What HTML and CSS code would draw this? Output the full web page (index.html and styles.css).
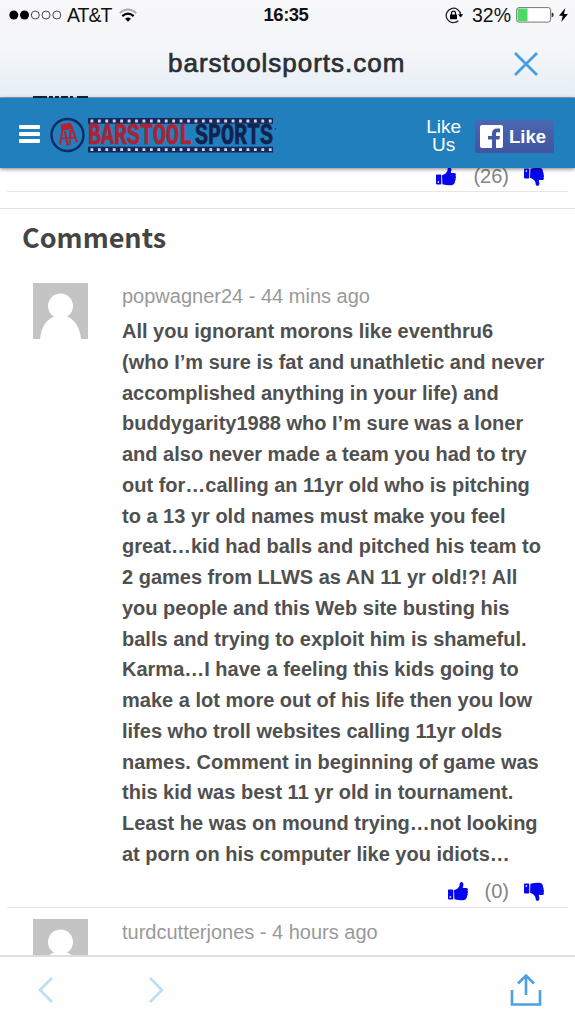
FILE: index.html
```html
<!DOCTYPE html>
<html lang="en">
<head>
    <meta charset="UTF-8">
    <meta name="viewport" content="width=device-width, initial-scale=1.0">
    <title>barstoolsports.com</title>
    <link rel="stylesheet" href="styles.css">
</head>
<body>
    <!-- shared icons -->
    <svg class="defs" width="0" height="0">
        <symbol id="thumb" viewBox="0 0 20 19">
            <path fill-rule="evenodd" d="M0.7 7.6h3.8q.8 0 .8.8v8.2q0 .8-.8.8H.8q-.8 0-.8-.8V8.400q0-.8.7-.8zM1.600 14.200v1.500h1.500v-1.500z"/>
            <path d="M6 8.300C8.500 7.600 10.400 6 11.200 4.300 11.700 3 11.500 1 12.400.4c1.300-.9 3 .2 3 2.100 0 1.500-.5 2.500-.6 3.500h3.500c1.600 0 2 1.800 1.200 2.700.7.9.6 2.100 0 2.800.4 1 .1 2-.6 2.600.2 1.500-.5 3.400-2.400 3.900-3.300.6-6.800-.1-10.100-.8z"/>
        </symbol>
        <symbol id="person" viewBox="0 0 55 56">
            <rect width="55" height="56" fill="#c4c4c4"/>
            <circle cx="27.500" cy="23" r="12.500" fill="#fff"/>
            <path d="M7 56C8 44 14 36 21 33.500h13C41 36 47 44 48 56z" fill="#fff"/>
        </symbol>
    </svg>

    <div class="browser-bar">
        <div class="status">
            <div class="carrier">
                <svg width="53" height="10" viewBox="0 0 53 10">
                    <circle cx="4.800" cy="5" r="4.500"/>
                    <circle cx="15.500" cy="5" r="4.500"/>
                    <g fill="none" stroke="#333" stroke-width="0.9">
                        <circle cx="26.300" cy="5" r="4"/>
                        <circle cx="37" cy="5" r="4"/>
                        <circle cx="47.800" cy="5" r="4"/>
                    </g>
                </svg>
                <span>AT&amp;T</span>
                <svg width="18" height="14" viewBox="0 0 18 14">
                    <path d="M6 10.800Q9 8.300 12 10.800L9 13.800z"/>
                    <path d="M3.300 8.100Q9 3.300 14.700 8.100" fill="none" stroke="#000" stroke-width="2.200"/>
                    <path d="M.7 5.100Q9-2.200 17.300 5.100" fill="none" stroke="#aaa" stroke-width="1.800"/>
                </svg>
            </div>
            <div class="clock">16:35</div>
            <div class="power">
                <svg width="19" height="17" viewBox="0 0 19 17">
                    <path d="M13.300 13.700A7.200 7.200 0 1 1 15.600 8" fill="none" stroke="#222" stroke-width="1.300"/>
                    <path d="M13 7.200h5.200l-2.600 3.400z"/>
                    <path d="M5 7.500h7v4.700H5z"/>
                    <path d="M6.500 8V6.200a2 2 0 0 1 4 0V8" fill="none" stroke="#000" stroke-width="1.200"/>
                </svg>
                <span class="percent">32%</span>
                <svg class="battery" width="38" height="16" viewBox="0 0 38 16">
                    <rect x=".6" y=".6" width="34" height="14.500" rx="2.300" fill="#fff" stroke="#777"/>
                    <path d="M2.500 1.500H11.500v12.700H2.500q-1 0-1-1V2.500q0-1 1-1z" fill="#4cd964"/>
                    <path d="M35.700 5.200q2 .5 2 2.600t-2 2.600z" fill="#333"/>
                </svg>
                <svg width="9" height="14" viewBox="0 0 9 14"><path d="M6.300 0L0 7.700h3.700L2.300 14 9 6H5z"/></svg>
            </div>
        </div>
        <div class="address">
            <span class="domain">barstoolsports.com</span>
            <svg class="close" width="26" height="26" viewBox="0 0 26 26"><path d="M2 2L24 24M24 2L2 24"/></svg>
        </div>
        <div class="cut-text"></div>
    </div>

    <div class="site-header">
        <div class="menu"><i></i><i></i><i></i></div>
        <svg class="logo" width="228" height="36" viewBox="0 0 228 36">
            <circle cx="17.500" cy="18" r="16" fill="none" stroke="#102a63" stroke-width="2.400"/>
            <g stroke="#b8202e" fill="none" stroke-width="2">
                <path d="M12.500 12L10 27.500M15 14L17.500 29M20.500 13L19.500 28M22 11L27 25.500"/>
                <path d="M11 21.500L25 20.500" stroke-width="1.300"/>
            </g>
            <path d="M10.500 7.500L20 5.800 22.500 9 23 12 11.500 13.500z" fill="#b8202e"/>
            <path class="band" d="M38 1h185v5.700H38zM38 29.700h185v5.700H38z"/>
            <path class="stars" d="M40.500 4H222M40.500 32.700H222"/>
            <text class="logo-a" x="38" y="27.300" textLength="104" lengthAdjust="spacingAndGlyphs">BARSTOOL</text>
            <text class="logo-b" x="145" y="27.300" textLength="78" lengthAdjust="spacingAndGlyphs">SPORTS</text>
            <circle cx="225.500" cy="12" r=".8" fill="#14285c"/>
        </svg>
        <div class="like-us"><div>Like</div><div>Us</div></div>
        <div class="fb-like">
            <svg width="23" height="23" viewBox="0 0 23 23">
                <rect width="23" height="23" rx="2" fill="#fff"/>
                <path d="M12 23v-8.500H8V11h4V8.500C12 5.300 14 3.500 17 3.500h3V7.200h-2.400C16.300 7.200 16 7.800 16 9v2h4l-.6 3.500H16V23z" fill="#4359a8"/>
            </svg>
            <span>Like</span>
        </div>
    </div>

    <div class="page">
        <div class="votes votes-top">
            <svg class="thumb"><use href="#thumb"/></svg>
            <span>(26)</span>
            <svg class="thumb down"><use href="#thumb"/></svg>
        </div>
        <h2>Comments</h2>
        <div class="comment">
            <svg class="avatar"><use href="#person"/></svg>
            <div class="comment-main">
                <div class="meta">popwagner24 - 44 mins ago</div>
                <p>All you ignorant morons like eventhru6<br>
                (who I’m sure is fat and unathletic and never<br>
                accomplished anything in your life) and<br>
                buddygarity1988 who I’m sure was a loner<br>
                and also never made a team you had to try<br>
                out for…calling an 11yr old who is pitching<br>
                to a 13 yr old names must make you feel<br>
                great…kid had balls and pitched his team to<br>
                2 games from LLWS as AN 11 yr old!?! All<br>
                you people and this Web site busting his<br>
                balls and trying to exploit him is shameful.<br>
                Karma…I have a feeling this kids going to<br>
                make a lot more out of his life then you low<br>
                lifes who troll websites calling 11yr olds<br>
                names. Comment in beginning of game was<br>
                this kid was best 11 yr old in tournament.<br>
                Least he was on mound trying…not looking<br>
                at porn on his computer like you idiots…</p>
            </div>
        </div>
        <div class="votes">
            <svg class="thumb"><use href="#thumb"/></svg>
            <span>(0)</span>
            <svg class="thumb down"><use href="#thumb"/></svg>
        </div>
        <div class="comment next">
            <svg class="avatar"><use href="#person"/></svg>
            <div class="comment-main">
                <div class="meta">turdcutterjones - 4 hours ago</div>
            </div>
        </div>
    </div>

    <div class="toolbar">
        <svg class="arrow" width="16" height="28" viewBox="0 0 16 28"><path d="M14 2L2 14 14 26"/></svg>
        <svg class="arrow forward" width="16" height="28" viewBox="0 0 16 28"><path d="M2 2L14 14 2 26"/></svg>
        <svg class="share" width="32" height="34" viewBox="0 0 32 34"><path d="M2 17v14.500h28V17M16 22V3M8 10.500L16 2.500l8 8"/></svg>
    </div>
</body>
</html>
```
FILE: styles.css
```css
* {
    margin: 0;
    padding: 0;
    box-sizing: border-box;
}
body {
    width: 575px;
    height: 1024px;
    overflow: hidden;
    background: #fff;
    font-family: "Liberation Sans", Arial, sans-serif;
    display: flex;
    flex-direction: column;
}
svg {
    display: block;
    flex: none;
}
.defs {
    position: absolute;
}

/* browser bar */
.browser-bar {
    height: 98px;
    flex: none;
    background: linear-gradient(#f8f8fa, #f5f6f9 50%, #e6eef6);
    border-bottom: 1px solid #8fa5b5;
    position: relative;
}
.status {
    height: 30px;
    padding: 0 7px 0 9px;
    display: grid;
    grid-template-columns: 1fr auto 1fr;
    align-items: center;
    font-size: 19.5px;
    color: #111;
}
.carrier, .power {
    display: flex;
    align-items: center;
}
.carrier {
    gap: 5px;
}
.carrier span {
    letter-spacing: -1px;
    margin-right: 3px;
}
.clock {
    font-size: 18.5px;
    font-weight: bold;
    letter-spacing: -0.5px;
    margin-left: -5px;
}
.power {
    justify-content: flex-end;
}
.percent {
    margin: 0 5px 0 8px;
}
.battery {
    margin-right: 5px;
}
.address {
    height: 67px;
    display: flex;
    align-items: center;
    padding: 0 36px 0 168px;
    justify-content: space-between;
}
.domain {
    font-size: 26px;
    line-height: 30px;
    margin-top: -2px;
    letter-spacing: 0.98px;
    color: #2b2e33;
    -webkit-text-stroke: 0.7px #2b2e33;
}
.close {
    fill: none;
    stroke: #459fe2;
    stroke-width: 2.8;
}
.cut-text {
    position: absolute;
    left: 33px;
    bottom: -1px;
    width: 55px;
    height: 2px;
    background: linear-gradient(90deg, #14233c 14px, transparent 14px 16px, #14233c 16px 20px, transparent 20px 22px, #14233c 22px 26px, transparent 26px 28px, #14233c 28px 35px, transparent 35px 37px, #14233c 37px 40px, transparent 40px 44px, #14233c 44px);
}

/* site header */
.site-header {
    height: 70px;
    flex: none;
    background: #207fbc;
    display: flex;
    align-items: center;
    padding: 4px 21px 0 19px;
    box-shadow: 0 1px 4px rgba(0, 0, 0, 0.5);
    z-index: 1;
}
.menu {
    width: 21px;
    display: flex;
    flex-direction: column;
    gap: 3px;
    margin: -2px 10px 0 0;
}
.menu i {
    height: 4px;
    border-radius: 1px;
    background: #fff;
}
.logo .band {
    fill: #14285c;
}
.logo .stars {
    stroke: #d8d3e4;
    stroke-width: 2.8;
    stroke-dasharray: 2.8 4.63;
}
.logo text {
    font-family: "Liberation Mono", monospace;
    font-weight: bold;
    font-size: 29px;
    stroke-width: 0.6;
}
.logo-a {
    fill: #ab2335;
    stroke: #ab2335;
}
.logo-b {
    fill: #12224f;
    stroke: #12224f;
}
.like-us {
    margin-left: auto;
    margin-right: 14px;
    padding-top: 2px;
    color: #fff;
    font-size: 19px;
    line-height: 18px;
    text-align: center;
}
.fb-like {
    width: 79px;
    height: 33px;
    background: linear-gradient(#4c67b2, #4054a1);
    border-radius: 2px;
    display: flex;
    align-items: center;
    padding-left: 5px;
    gap: 6px;
    color: #fff;
    font-size: 18.5px;
    line-height: 24px;
    font-weight: bold;
    margin-top: 2px;
}
.fb-like span {
    padding-top: 2px;
}

/* comments */
.page {
    height: 787px;
    flex: none;
    overflow: hidden;
}
.votes {
    height: 38px;
    margin: 0 7px;
    padding: 6px 24px 0 0;
    border-bottom: 1px solid #e6e6e6;
    display: flex;
    justify-content: flex-end;
    align-items: center;
    font-size: 20px;
    color: #858585;
}
.votes span {
    margin: 0 15px 0 17px;
}
.votes-top {
    height: 36px;
    margin-top: -12px;
}
.thumb {
    width: 20px;
    height: 19px;
    fill: #0505ee;
}
.thumb.down {
    transform: scaleY(-1);
}
h2 {
    margin-top: 16px;
    padding: 10px 0 0 22px;
    height: 75px;
    border-top: 1px solid #e2e2e2;
    font-family: "Noto Sans CJK SC", sans-serif;
    font-size: 27px;
    line-height: 36px;
    color: #444;
}
.comment {
    display: flex;
    padding-left: 33px;
    gap: 34px;
}
.avatar {
    width: 55px;
    height: 56px;
}
.meta {
    color: #999;
    font-size: 20px;
    line-height: 26px;
}
.comment p {
    margin-top: 7px;
    color: #505050;
    font-size: 20px;
    font-weight: bold;
    line-height: 30.76px;
    white-space: nowrap;
}
.next {
    padding-top: 11px;
}

/* bottom toolbar */
.toolbar {
    height: 69px;
    flex: none;
    border-top: 2px solid #dedede;
    background: #fefefe;
    display: flex;
    align-items: center;
    padding: 0 33px 0 38px;
}
.toolbar svg {
    fill: none;
    stroke-width: 2.6;
    margin-top: -2px;
}
.arrow {
    stroke: #bddcf5;
}
.forward {
    margin-left: 94px;
}
.share {
    margin-left: auto;
    stroke: #4ba1e2;
}
```
